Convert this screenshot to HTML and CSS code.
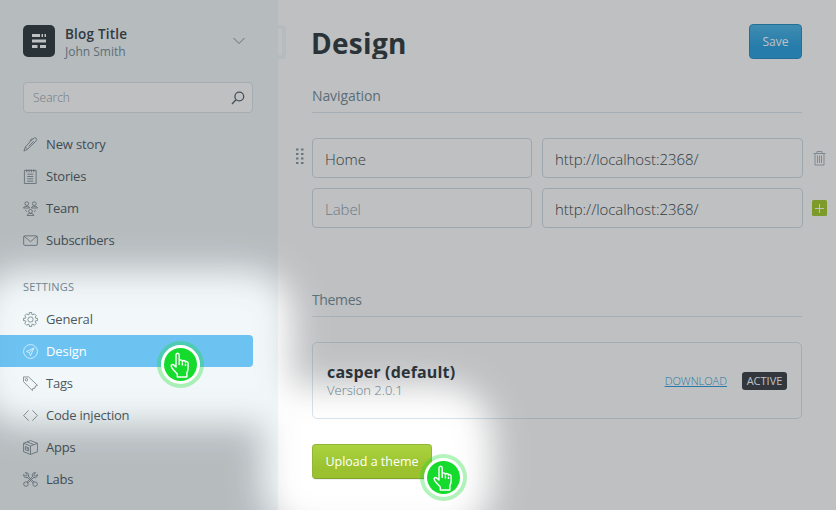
FILE: index.html
```html
<!DOCTYPE html>
<html lang="en">
<head>
<meta charset="utf-8">
<title>Design</title>
<link rel="stylesheet" href="styles.css">
</head>
<body>
<div class="app">
  <aside class="sidebar">
    <header class="blog">
      <svg class="logo" viewBox="0 0 32 32"><rect width="32" height="32" rx="5"/><path d="M9 10.500h8M18.500 10.500h1.500M21.500 10.500h1.500M9 16h14M9 21.500h5.500M17 21.500h6"/></svg>
      <div class="blog-text"><div class="blog-title">Blog Title</div><div class="blog-user">John Smith</div></div>
      <svg class="chevron" viewBox="0 0 12 8"><path d="M.5 1l5.500 5.500L11.500 1"/></svg>
    </header>
    <div class="search"><span>Search</span><svg viewBox="0 0 14 14"><circle cx="8.300" cy="5.500" r="4.400"/><path d="M5 8.800L1 13"/></svg></div>
    <nav class="menu">
      <a class="item"><svg class="icon" viewBox="0 0 16 16"><path d="M1 15l1.500-4.500 8-8.500q2-2 3.500-.7t-.5 3.400l-8.300 8zM2.500 10.500l2.500 2.200M10 1.200L7 4.500M6 10l5.500-5.500"/></svg><span>New story</span></a>
      <a class="item"><svg class="icon" viewBox="0 0 16 16"><path d="M1.500 1.500h12.500v14H1.500zM4 .5v3M6.500.5v3M9 .5v3M11.500.5v3M4.500 5.500h6.500M4.500 8h6.500M4.500 10.500h6.500M4.500 13h6.500"/></svg><span>Stories</span></a>
      <a class="item"><svg class="icon" viewBox="0 0 16 16"><circle cx="4" cy="2.800" r="2"/><circle cx="12" cy="2.800" r="2"/><circle cx="8" cy="11" r="2"/><path d="M.5 7.500Q.5 6 3 5.700h2q2 .3 2 1.800zM9 7.500q0-1.500 2-1.800h2q2.500.3 2.500 1.800zM4.500 15.500q0-1.800 2.500-2.200h2q2.500.4 2.500 2.200zM2.500 9.500l1.500 2M13.500 9.500l-1.500 2"/></svg><span>Team</span></a>
      <a class="item"><svg class="icon" viewBox="0 0 16 16"><rect x=".7" y="3" width="14.600" height="10.200" rx="1.200"/><path d="M1.200 3.500L8 9.300l6.800-5.800"/></svg><span>Subscribers</span></a>
    </nav>
    <h2 class="menu-title">SETTINGS</h2>
    <nav class="menu">
      <a class="item"><svg class="icon" viewBox="0 0 16 16"><circle cx="8" cy="8" r="2.800"/><path d="M6.700.6h2.600v1.900l1.300.6L12 1.800 14.200 4l-1.300 1.400.6 1.300h1.900v2.600h-1.900l-.6 1.300 1.300 1.400-2.200 2.200-1.400-1.300-1.300.6v1.900H6.700v-1.900l-1.300-.6L4 14.200 1.800 12l1.300-1.400-.6-1.300H.6V6.700h1.900l.6-1.300L1.800 4 4 1.800l1.400 1.300 1.300-.6z"/></svg><span>General</span></a>
      <a class="item active"><svg class="icon" viewBox="0 0 16 16"><circle cx="8" cy="8" r="7.400"/><path d="M11.800 4.200L3.500 8l3.300 1.200L8 12.500zM6.800 9.200l5-5"/></svg><span>Design</span></a>
      <a class="item"><svg class="icon" viewBox="0 0 16 16"><path d="M.5 1h5.500l9.500 9-2.300.6-.4 2.400-2.400.3-.4 2.200L.5 6z"/><circle cx="3.700" cy="4" r="1.300"/></svg><span>Tags</span></a>
      <a class="item"><svg class="icon" viewBox="0 0 16 16"><path d="M6 2.500L.7 8 6 13.500M10 2.500L15.300 8 10 13.500"/></svg><span>Code injection</span></a>
      <a class="item"><svg class="icon" viewBox="0 0 16 16"><path d="M.6 3.500L8 .6l7.400 2.900v9L8 15.400.6 12.500zM.6 3.500L8 6.400l7.400-2.900M8 6.400v9M4.200 2l7.400 2.900M2.500 7l3.500 1.200v3.500L2.500 10.500zM3.700 8.800h1.200v1.200"/></svg><span>Apps</span></a>
      <a class="item"><svg class="icon" viewBox="0 0 16 16"><path d="M5.700 4.700l6 6M4.700 5.700l6 6M10.300 4.700l-6 6M11.300 5.700l-6 6M2.500.7l1.800 1.800-.2 1.600-1.600.2L.7 2.500Q.2 5.200 2.500 6h2.200L6 4.700V2.500Q5.200.2 2.500.7zM13.500.7l-1.800 1.800.2 1.600 1.600.2 1.800-1.800Q15.800 5.200 13.500 6h-2.200L10 4.700V2.500Q10.800.2 13.500.7z"/><circle cx="3.100" cy="12.900" r="2.400"/><circle cx="12.900" cy="12.900" r="2.400"/></svg><span>Labs</span></a>
    </nav>
  </aside>
  <main class="content">
    <i class="tab"></i>
    <header class="page-head"><h1>Design</h1><button class="save">Save</button></header>
    <h3 class="section navigation">Navigation</h3>
    <div class="nav-row"><svg class="grip" viewBox="0 0 8 17"><path d="M0 1.500h2.500M5 1.500h2.500M0 6h2.500M5 6h2.500M0 10.500h2.500M5 10.500h2.500M0 15h2.500M5 15h2.500"/></svg><div class="field">Home</div><div class="field url">http://localhost:2368/</div>
      <svg class="trash" viewBox="0 0 13 15"><path d="M.5 2.500h12M4 2V.5h5V2M2 3v11h9V3M4.500 4.500v7.500M6.500 4.500v7.500M8.500 4.500v7.500"/></svg></div>
    <div class="nav-row"><i class="grip"></i><div class="field empty">Label</div><div class="field url">http://localhost:2368/</div>
      <svg class="add" viewBox="0 0 15 16"><rect width="15" height="16" rx="1.500"/><path d="M3 8.500h9M7.500 4v9"/></svg></div>
    <h3 class="section themes">Themes</h3>
    <div class="theme"><div class="theme-text"><div class="theme-name">casper (default)</div><div class="version">Version 2.0.1</div></div><a class="download">DOWNLOAD</a><span class="badge">ACTIVE</span></div>
    <button class="upload">Upload a theme</button>
  </main>
</div>
<svg class="shade" viewBox="0 0 836 510">
  <defs>
    <filter id="soft" filterUnits="userSpaceOnUse" x="-150" y="130" width="850" height="550"><feGaussianBlur stdDeviation="17"/></filter>
    <mask id="spots" maskUnits="userSpaceOnUse" x="0" y="0" width="836" height="510"><rect width="836" height="510" fill="#fff"/><g filter="url(#soft)" fill="#000"><rect x="-22" y="270" width="314" height="155" rx="45"/><rect x="262" y="385" width="230" height="150" rx="50"/></g></mask>
    <g id="tap"><circle r="23.500" class="halo"/><circle r="19.500" class="ring"/><circle r="16.500" class="disc"/><path class="hand" d="M-4.500 2.500v-12q0-1.800 1.600-1.800t1.600 1.800v6.200q.1-1.300 1.500-1.300t1.700 1.600q.2-1 1.500-1t1.600 1.600q.3-.7 1.400-.5 1.200.2 1.200 1.700v5q0 2.200-1.200 4.200v4.500h-9.600v-3L-8.200 4q-1.800-3-.7-3.700 1.200-.8 2.800.8zM-1.300-3.300v3.800M1.900-2v3M5-.800v2.300"/></g>
  </defs>
  <rect class="dim" width="836" height="510" mask="url(#spots)"/>
  <use href="#tap" x="180.500" y="364.500"/>
  <use href="#tap" x="443.500" y="477.500"/>
</svg>
</body>
</html>
```
FILE: styles.css
```css
* { box-sizing: border-box; }
body { margin: 0; width: 836px; height: 510px; overflow: hidden; background: #fff; font: 13px/18px "Open Sans", "Noto Sans", sans-serif; color: #343f44; }
svg { display: block; fill: none; stroke: currentColor; flex: none; }
.app { display: flex; height: 510px; }
.sidebar { width: 278px; height: 510px; background: #f2f8fa; padding-top: 25px; flex: none; }
.blog { display: flex; height: 32px; padding: 0 33px 0 23px; align-items: center; }
.logo { width: 32px; height: 32px; color: #fff; stroke-width: 2.800; }
.logo rect { fill: #2a353a; stroke: none; }
.blog-text { margin-left: 10px; flex: 1; line-height: 17px; }
.blog-title { font-size: 13.500px; font-weight: 600; letter-spacing: .2px; margin-top: 3px; }
.blog-user { font-size: 12px; letter-spacing: 0; color: #738a94; }
.chevron { width: 12px; height: 8px; color: #808c91; }
.search { display: flex; justify-content: space-between; align-items: center; margin: 25px 25px 0 23px; height: 31px; border: 1px solid #dbe3e7; border-radius: 4px; background: #fff; padding: 0 7px 0 9px; font-size: 12px; font-weight: 300; color: #8b9ca5; }
.search svg { width: 14px; height: 14px; color: #535f65; stroke-width: 1.300; }
.menu { display: flex; flex-direction: column; margin-right: 25px; }
.search + .menu { margin-top: 15px; }
.item { display: flex; align-items: center; height: 32px; padding-left: 23px; gap: 8px; font-size: 13px; color: #4c585e; letter-spacing: -.22px; }
.item:first-child { letter-spacing: -.15px; }
.icon { width: 15px; height: 15px; stroke-width: .9; color: #75838a; }
.active { background: #6cc3f2; color: #fff; border-radius: 0 4px 4px 0; font-weight: 500; letter-spacing: -.1px; }
.active .icon { color: #d9f1ff; }
.menu-title { margin: 21px 0 6px 23px; font-size: 11px; line-height: 20px; font-weight: 400; color: #738a94; letter-spacing: .2px; }
.content { position: relative; width: 558px; padding: 24px 9px 0 34px; }
.tab { position: absolute; left: -4px; top: 25px; width: 12px; height: 34px; border: 4px solid #f2f8fa; border-radius: 3px; }
.page-head { display: flex; justify-content: space-between; height: 35px; margin-right: 25px; }
h1 { margin: 0 0 0 -1px; height: 35px; overflow: hidden; font-size: 28px; line-height: 39px; font-weight: 700; color: #2a353a; letter-spacing: .3px; }
button { font: 500 12px/18px "Open Sans", sans-serif; color: #fff; padding: 1px 0 0; border-radius: 4px; }
.save { width: 53px; height: 35px; border: 1px solid #218ac0; background: linear-gradient(#48b5e8, #24a0de 65%); }
.section { margin: 0 25px 0 0; border-bottom: 1px solid #dae6ed; font-size: 14px; font-weight: 400; color: #738a94; line-height: 20px; letter-spacing: -.1px; }
.navigation { height: 27px; margin: 27px 25px 25px 0; }
.nav-row { display: flex; align-items: center; height: 40px; margin: 0 0 10px -16px; }
.grip { width: 8px; height: 17px; margin: -4px 8px 0 0; color: #8296a0; stroke-width: 2; flex: none; }
.field { width: 220px; height: 40px; border: 1px solid #cddce3; border-radius: 4px; padding: 1px 12px 0; font-size: 15px; line-height: 38px; font-weight: 300; letter-spacing: -.06px; }
.url { width: 261px; margin-left: 10px; }
.empty { color: #8b9ca5; }
.trash { width: 13px; height: 15px; margin-left: 10px; color: #a3b3bb; }
.add { width: 15px; height: 16px; margin-left: 9px; color: #fff; }
.add rect { fill: #9fcb28; stroke: none; }
.themes { height: 27px; margin: 62px 25px 25px 0; letter-spacing: -.35px; }
.theme { display: flex; align-items: center; width: 490px; height: 77px; border: 1px solid #d7e4ee; border-radius: 5px; padding: 0 14px; }
.theme-text { flex: 1; }
.theme-name { font-size: 16px; line-height: 20px; font-weight: 700; letter-spacing: .18px; color: #2a353a; }
.version { font-size: 13px; line-height: 17px; color: #738a94; font-weight: 300; }
.download { font-size: 11px; color: #269bd8; text-decoration: underline; font-weight: 300; }
.badge { margin-left: 15px; width: 45px; height: 18px; border-radius: 3px; background: #343c40; color: #fff; font-size: 11px; line-height: 18px; text-align: center; letter-spacing: 0; }
.upload { width: 120px; height: 35px; margin-top: 25px; border: 1px solid #93b536; border-bottom-color: #7fa32b; background: linear-gradient(#aad341, #9bc22e 70%); box-shadow: 0 1px 1px #0001; font-size: 12.500px; }
.shade { position: absolute; inset: 0; width: 836px; height: 510px; pointer-events: none; stroke: none; }
.dim { fill: #2a2f36; fill-opacity: .3; }
.halo { fill: #12d92e; fill-opacity: .32; }
.ring { fill: #fff; }
.disc { fill: #15db2d; }
.hand { fill: none; stroke: #fff; stroke-width: 1.400; stroke-linejoin: round; }
```
